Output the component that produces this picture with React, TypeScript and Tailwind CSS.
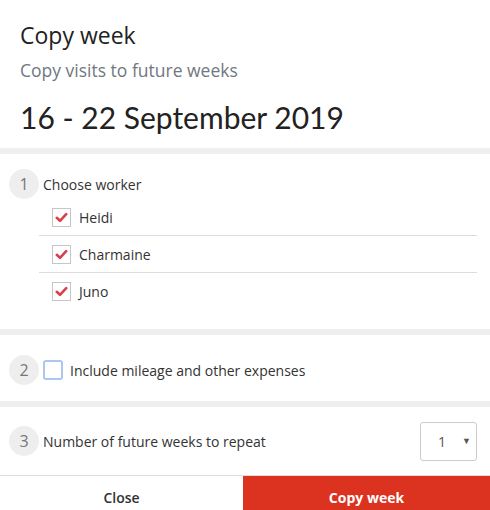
import React from 'react'

const workers = ['Heidi', 'Charmaine', 'Juno']

function StepBadge({ n }: { n: number }) {
    return (
        <div className="flex h-[30px] w-[30px] shrink-0 items-center justify-center rounded-full bg-[#eeeeee] text-[16px] text-[#777]">
            {n}
        </div>
    )
}

function CheckBox({ checked }: { checked: boolean }) {
    return (
        <span className="flex h-[19px] w-[19px] shrink-0 items-center justify-center border border-[#c6c6c6] bg-white">
            {checked && (
                <svg width="13" height="13" viewBox="0 0 13 13">
                    <path d="M1.8 6.8 L5 9.8 L11.2 3.2" fill="none" stroke="#d6414b" strokeWidth="2.6" strokeLinecap="round" strokeLinejoin="round" />
                </svg>
            )}
        </span>
    )
}

function Divider() {
    return <div className="h-[6px] bg-[#efefef]" />
}

export default function App() {
    return (
        <div className="w-[490px] h-[510px] overflow-hidden bg-white text-[#333]" style={{ fontFamily: '"Open Sans", "Noto Sans", sans-serif' }}>
            <header className="px-5 pt-5 pb-[11px]">
                <h2 className="text-[23px] leading-[30px] text-[#222]">Copy week</h2>
                <p className="mt-2 text-[17.5px] leading-[24px] text-[#707880]">Copy visits to future weeks</p>
                <h1 className="mt-[15px] font-['Lato',sans-serif] text-[30px] leading-[40px] text-[#222]">16 - 22 September 2019</h1>
            </header>
            <Divider />

            {/* step 1 */}
            <section className="pt-[15px] pb-[19px]">
                <div className="flex h-[30px] items-center gap-1 pl-[9px]">
                    <StepBadge n={1} />
                    <span className="text-[14px] text-[#333]">Choose worker</span>
                </div>
                <ul className="ml-[39px] mr-[13px]">
                    {workers.map((w, i) => (
                        <li
                            key={w}
                            className={`flex h-[37px] items-center gap-2 pl-[13px] ${i < workers.length - 1 ? 'border-b border-[#dddddd]' : ''}`}
                        >
                            <CheckBox checked />
                            <span className="text-[14px] text-[#333]">{w}</span>
                        </li>
                    ))}
                </ul>
            </section>
            <Divider />

            {/* step 2 */}
            <section className="flex items-center gap-1 pl-[9px] pt-5 pb-4">
                <StepBadge n={2} />
                <span className="h-[20px] w-[20px] shrink-0 rounded-[3px] border-2 border-[#aac6f2] bg-white" />
                <span className="ml-[3px] text-[14px] text-[#333]">Include mileage and other expenses</span>
            </section>
            <Divider />

            {/* step 3 */}
            <section className="flex h-[68px] items-center gap-1 pl-[9px] pr-[13px]">
                <StepBadge n={3} />
                <span className="text-[14px] text-[#333]">Number of future weeks to repeat</span>
                <div className="ml-auto flex h-[39px] w-[57px] items-center rounded-[3px] border border-[#cccccc] pl-[17px] pr-[5px] text-[14px] text-[#555]">
                    <span>1</span>
                    <span className="ml-auto text-[9px] text-[#555]">▼</span>
                </div>
            </section>

            <footer className="flex h-[43px] border-t border-[#dddddd]">
                <button className="flex w-[243px] items-center justify-center bg-white text-[14px] font-semibold text-[#333]">Close</button>
                <button className="flex flex-1 items-center justify-center bg-[#dc3220] text-[14px] font-bold text-white">Copy week</button>
            </footer>
        </div>
    )
}
